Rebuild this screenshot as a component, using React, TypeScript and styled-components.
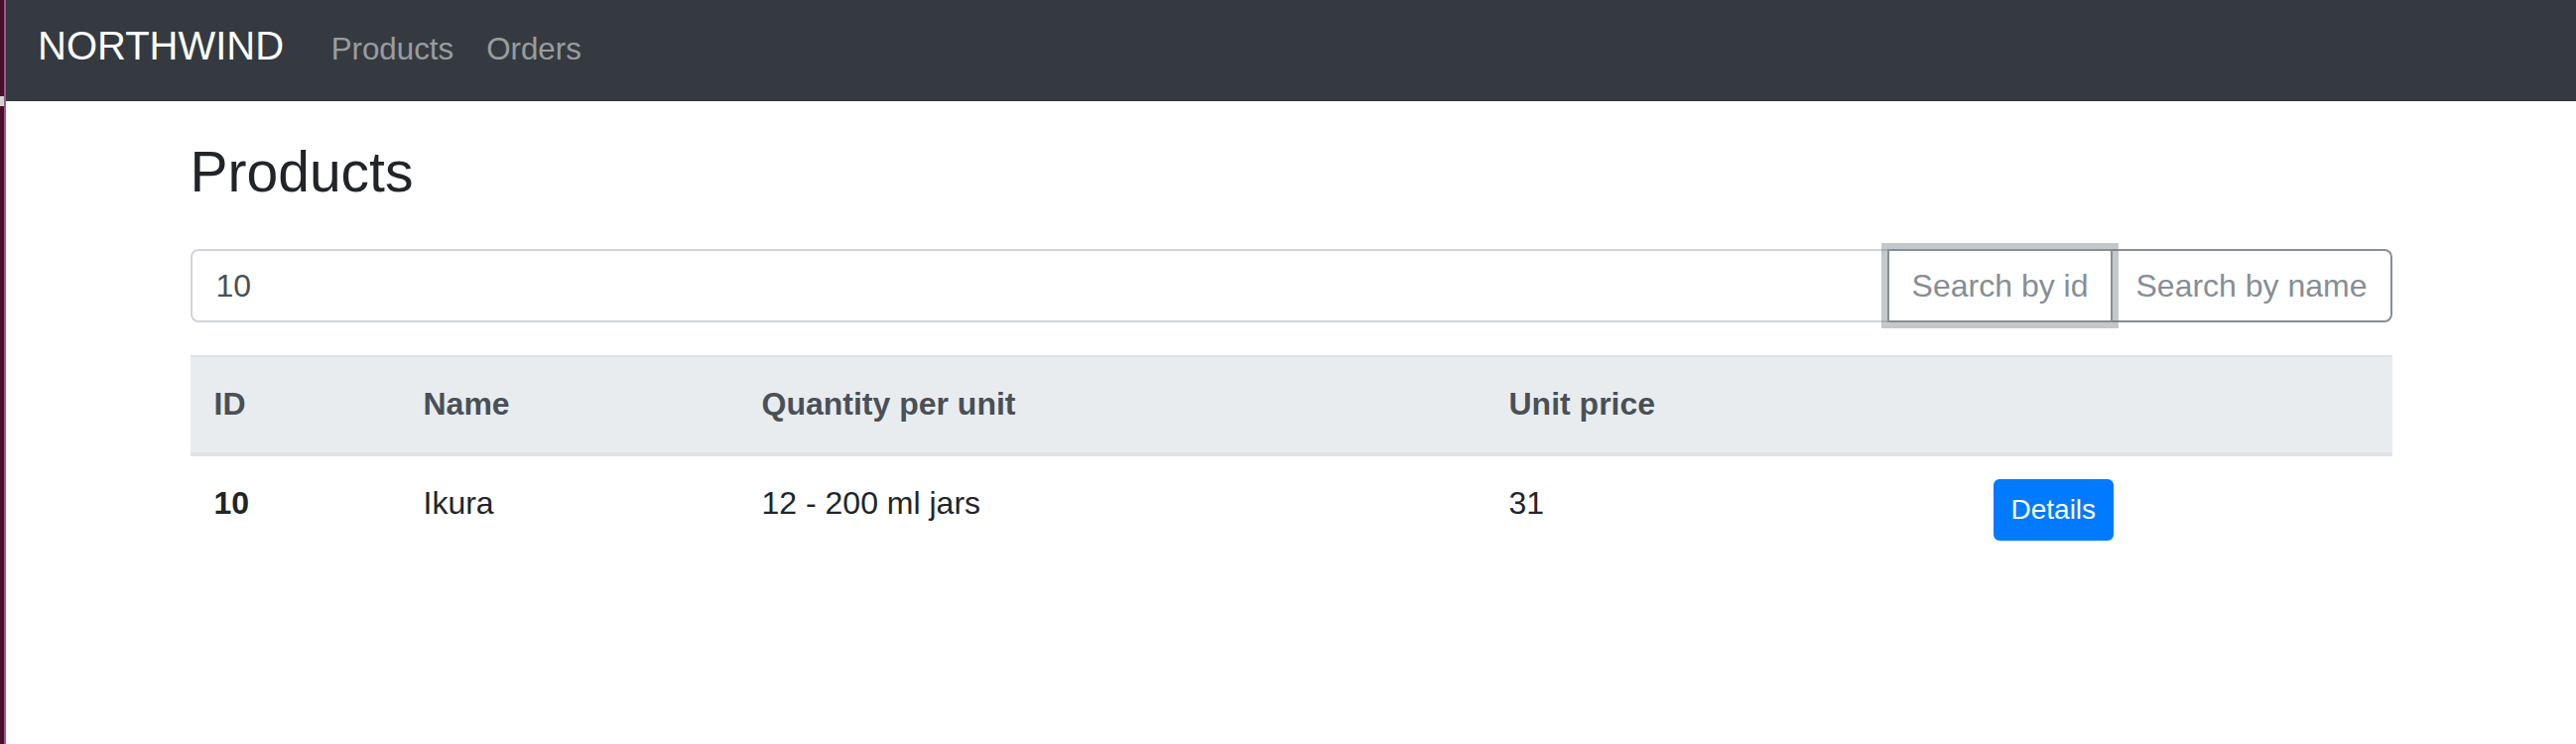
import React from "react";
import styled, { createGlobalStyle } from "styled-components";

const Global = createGlobalStyle`
  html, body { margin: 0; padding: 0; background: #ffffff; }
  body { font-family: "Liberation Sans", Arial, sans-serif; color: #212529; }
  * { box-sizing: border-box; }
`;

const Page = styled.div`
  display: flex;
  min-height: 100vh;
`;

const Strip = styled.div`
  position: relative;
  flex: 0 0 6px;
  background: #4a0d2b;
  border-right: 2px solid #985a8b;
`;

const Nub = styled.span`
  position: absolute;
  left: 0;
  top: 97px;
  width: 4px;
  height: 10px;
  background: #d2d2d2;
`;

const Main = styled.div`
  flex: 1;
  display: flex;
  flex-direction: column;
  min-width: 0;
`;

const Navbar = styled.nav`
  height: 102px;
  background: #343a40;
  display: flex;
  align-items: baseline;
  padding: 16px 32px 0;
`;

const Brand = styled.a`
  font-size: 40px;
  line-height: 60px;
  color: #ffffff;
  text-decoration: none;
  margin-right: 31px;
`;

const NavLink = styled.a`
  font-size: 31.3px;
  line-height: 48px;
  padding: 0 16.5px;
  color: rgba(255, 255, 255, 0.5);
  text-decoration: none;
`;

const Container = styled.div`
  width: 2219px;
  margin: 0 auto;
  padding-top: 37px;
`;

const Title = styled.h1`
  margin: 0 0 44px;
  font-size: 57px;
  line-height: 1.2;
  font-weight: 500;
  color: #212529;
`;

const InputGroup = styled.div`
  display: flex;
  height: 74px;
  margin-bottom: 33px;
`;

const SearchInput = styled.input`
  flex: 1;
  min-width: 0;
  height: 74px;
  border: 2px solid #ced4da;
  border-radius: 8px 0 0 8px;
  padding: 0 24px;
  font-family: inherit;
  font-size: 32px;
  color: #495057;
  background: #fff;
  outline: none;
`;

const GroupButton = styled.button<{ $focused?: boolean; $last?: boolean }>`
  position: relative;
  z-index: ${(p) => (p.$focused ? 2 : 1)};
  margin-left: -2px;
  height: 74px;
  padding: 0 23px;
  border: 2px solid #868e96;
  border-radius: ${(p) => (p.$last ? "0 8px 8px 0" : "0")};
  background: #fff;
  color: #868e96;
  font-family: inherit;
  font-size: 32px;
  line-height: 48px;
  white-space: nowrap;
  box-shadow: ${(p) => (p.$focused ? "0 0 0 6px rgba(108, 117, 125, 0.4)" : "none")};
  cursor: pointer;
`;

const Table = styled.table`
  width: 100%;
  border-collapse: collapse;
  font-size: 32px;
  line-height: 48px;
`;

const HeadCell = styled.th<{ $w: number }>`
  width: ${(p) => p.$w}px;
  text-align: left;
  vertical-align: top;
  padding: 23px 24px 25px;
  background: #e9ecef;
  color: #495057;
  font-weight: 700;
  border-top: 2px solid #dee2e6;
  border-bottom: 4px solid #dee2e6;
`;

const Cell = styled.td<{ $bold?: boolean }>`
  text-align: left;
  vertical-align: top;
  padding: 23px 24px 24px;
  color: #212529;
  font-weight: ${(p) => (p.$bold ? 700 : 400)};
`;

const DetailsButton = styled.button`
  display: inline-block;
  background: #007bff;
  border: 2px solid #007bff;
  border-radius: 6px;
  color: #ffffff;
  font-family: inherit;
  font-size: 28px;
  line-height: 42px;
  padding: 8px 16px;
  cursor: pointer;
`;

const columns = [
  { label: "ID", w: 211 },
  { label: "Name", w: 341 },
  { label: "Quantity per unit", w: 753 },
  { label: "Unit price", w: 488 },
  { label: "", w: 426 },
];

export default function App() {
  return (
    <>
      <Global />
      <Page>
        <Strip>
          <Nub />
        </Strip>
        <Main>
          <Navbar>
            <Brand href="#">NORTHWIND</Brand>
            <NavLink href="#">Products</NavLink>
            <NavLink href="#">Orders</NavLink>
          </Navbar>
          <Container>
            <Title>Products</Title>
            <InputGroup>
              <SearchInput defaultValue="10" />
              <GroupButton $focused>Search by id</GroupButton>
              <GroupButton $last>Search by name</GroupButton>
            </InputGroup>
            <Table>
              <thead>
                <tr>
                  {columns.map((c, i) => (
                    <HeadCell key={i} $w={c.w}>
                      {c.label}
                    </HeadCell>
                  ))}
                </tr>
              </thead>
              <tbody>
                <tr>
                  <Cell $bold>10</Cell>
                  <Cell>Ikura</Cell>
                  <Cell>12 - 200 ml jars</Cell>
                  <Cell>31</Cell>
                  <Cell>
                    <DetailsButton>Details</DetailsButton>
                  </Cell>
                </tr>
              </tbody>
            </Table>
          </Container>
        </Main>
      </Page>
    </>
  );
}
